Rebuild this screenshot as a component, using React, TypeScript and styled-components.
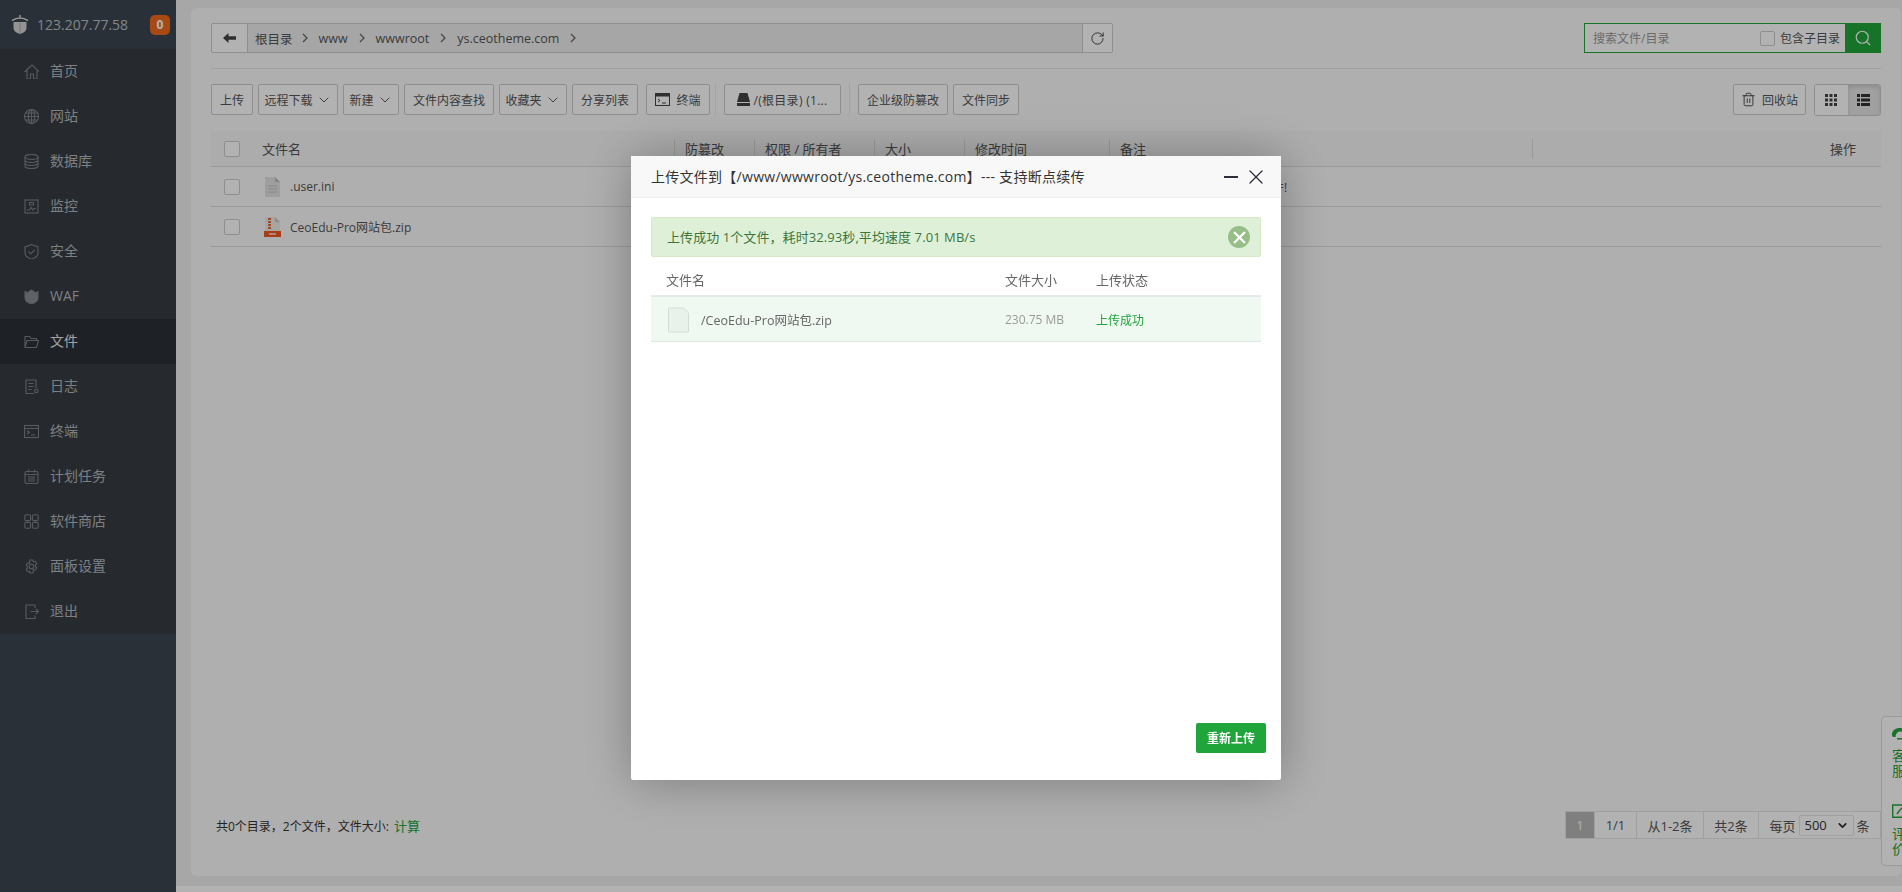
import React from 'react'
import styled, {createGlobalStyle} from 'styled-components'
import {ChevronDown, Search, RotateCw, Trash2, X} from 'lucide-react'

const FONT = `"Open Sans", "Noto Sans CJK SC", sans-serif`

const GlobalStyle = createGlobalStyle`
  html, body { margin: 0; padding: 0; height: 100%; overflow: hidden; background: #fff; }
  * { box-sizing: border-box; }
  body { font-family: ${FONT}; font-size: 12px; color: #555; }
`

const Page = styled.div`
  display: flex;
  width: 1902px;
  height: 892px;
`

const Sidebar = styled.aside`
  width: 176px;
  flex: none;
  background: #3d454f;
`

const Brand = styled.div`
  height: 49px;
  display: flex;
  align-items: center;
  padding: 0 6px 0 11px;
  color: #b9c0c6;
  font-size: 14px;
`

const BrandIp = styled.span`
  margin-left: 8px;
  flex: 1;
`

const Badge = styled.span`
  width: 20px;
  height: 20px;
  border-radius: 5px;
  background: #f0691c;
  color: #fff;
  font-size: 12px;
  font-weight: 700;
  display: flex;
  align-items: center;
  justify-content: center;
`

const NavList = styled.nav`
  background: #373d44;
`

const NavItem = styled.a<{$active?: boolean}>`
  height: 45px;
  display: flex;
  align-items: center;
  padding-left: 24px;
  gap: 11px;
  font-size: 14px;
  color: ${p => (p.$active ? '#e8e8e8' : '#b4b8bc')};
  background: ${p => (p.$active ? '#2c3036' : 'transparent')};
`

const NavLabel = styled.span`
  margin-top: -3px;
`

const NavIcon = styled.svg`
  width: 15px;
  height: 15px;
  flex: none;
  fill: none;
  stroke: #7f8286;
  stroke-width: 1.1;
`

const Main = styled.main`
  flex: 1;
  min-width: 0;
  background: #f0f0f0;
  padding: 8px 1px 10px 15px;
  height: 886px;
`

const Box = styled.section`
  height: 100%;
  background: #fbfbfb;
  border-radius: 5px;
  padding: 15px 20px 0 20px;
  position: relative;
  display: flex;
  flex-direction: column;
`

const TopRow = styled.div`
  display: flex;
  justify-content: space-between;
  height: 46px;
  flex: none;
  border-bottom: 1px solid #e5e5e5;
`

const PathBar = styled.div`
  width: 902px;
  height: 30px;
  display: flex;
  border: 1px solid #ccc;
  border-radius: 2px;
  background: #fff;
`

const BackBtn = styled.span`
  width: 36px;
  display: flex;
  align-items: center;
  justify-content: center;
  border-right: 1px solid #ccc;
`

const Crumbs = styled.div`
  flex: 1;
  background: #eee;
  display: flex;
  align-items: center;
  padding-left: 7px;
  gap: 10px;
  color: #555;
  font-size: 12.5px;
`

const Crumb = styled.span`
  &:first-child {
    margin-right: -2px;
  }
`

const CrumbArrow = styled.svg`
  width: 8px;
  height: 10px;
  fill: none;
  stroke: #666;
  stroke-width: 1.3;
`

const RefreshBtn = styled.span`
  width: 30px;
  display: flex;
  align-items: center;
  justify-content: center;
  border-left: 1px solid #ccc;
  color: #444;
`

const SearchBox = styled.div`
  width: 297px;
  height: 30px;
  display: flex;
  align-items: center;
  border: 1px solid #20a53a;
  background: #fff;
  padding-left: 8px;
  color: #999;
`

const SearchHint = styled.span`
  flex: 1;
`

const SearchCheck = styled.label`
  display: flex;
  align-items: center;
  gap: 5px;
  color: #555;
  margin-right: 5px;
`

const SearchBtn = styled.span`
  width: 36px;
  height: 30px;
  margin-right: -1px;
  background: #20a53a;
  color: #fff;
  display: flex;
  align-items: center;
  justify-content: center;
`

const Check = styled.span<{$size?: number}>`
  width: ${p => p.$size ?? 16}px;
  height: ${p => p.$size ?? 16}px;
  flex: none;
  display: block;
  background: #fff;
  border: 1px solid #ccc;
  border-radius: 2px;
`

const Toolbar = styled.div`
  display: flex;
  align-items: center;
  height: 31px;
  flex: none;
  margin-top: 15px;
  gap: 5px;
`

const Btn = styled.span<{$w: number; $offset?: number}>`
  width: ${p => p.$w}px;
  height: 31px;
  flex: none;
  margin-left: ${p => p.$offset ?? 0}px;
  display: flex;
  align-items: center;
  justify-content: center;
  gap: 3px;
  border: 1px solid #ccc;
  border-radius: 2px;
  background: #fff;
  color: #555;
  white-space: nowrap;
`

const DiskLabel = styled.span`
  letter-spacing: 0.3px;
`

const Divider = styled.span<{$offset?: number}>`
  width: 1px;
  height: 31px;
  margin: 0 3px 0 ${p => p.$offset ?? 0}px;
  background: #e8e8e8;
`

const ToolSpacer = styled.span`
  flex: 1;
`

const ViewToggle = styled.div`
  width: 67px;
  height: 32px;
  margin-left: 3px;
  display: flex;
  border: 1px solid #ccc;
  border-radius: 3px;
  overflow: hidden;
  background: #fff;
`

const ViewBtn = styled.span<{$on?: boolean}>`
  flex: 1;
  display: flex;
  align-items: center;
  justify-content: center;
  background: ${p => (p.$on ? '#e6e6e6' : '#fff')};
  box-shadow: ${p => (p.$on ? 'inset 0 2px 4px rgba(0,0,0,.13)' : 'none')};
`

const TableHead = styled.div`
  display: grid;
  grid-template-columns: 51px 412px 80px 120px 90px 145px 423px 1fr;
  height: 36px;
  flex: none;
  margin-top: 16px;
  align-items: center;
  background: #f6f6f6;
  border-bottom: 1px solid #ddd;
  font-size: 13px;
  color: #555;
`

const CheckCell = styled.span`
  padding-left: 13px;
`

const HeadCell = styled.span<{$sep?: boolean}>`
  height: 20px;
  display: flex;
  align-items: center;
  padding-left: 10px;
  border-left: ${p => (p.$sep ? '1px solid #ddd' : 'none')};
`

const NameHead = styled.span``

const ActionHead = styled(HeadCell)`
  justify-content: flex-end;
  padding-right: 25px;
`

const FileRow = styled.div`
  display: flex;
  align-items: center;
  height: 40px;
  flex: none;
  border-bottom: 1px solid #ddd;
  padding-left: 13px;
`

const FileIcon = styled.svg`
  width: 17px;
  height: 20px;
  margin-left: 24px;
  flex: none;
`

const FileName = styled.span`
  margin-left: 9px;
  color: #555;
  width: 400px;
`

const FileNote = styled.span`
  margin-left: 442px;
  color: #555;
  white-space: nowrap;
`

const Footer = styled.div`
  margin-top: auto;
  margin-bottom: 37px;
  display: flex;
  align-items: center;
  justify-content: space-between;
  height: 28px;
  flex: none;
  padding-left: 5px;
  color: #333;
`

const FooterText = styled.span`
  padding-top: 1px;
`

const GreenLink = styled.span`
  color: #20a53a;
  font-size: 13px;
  margin-left: 2px;
`

const Pager = styled.div`
  display: flex;
  height: 28px;
  border: 1px solid #e5e5e5;
  border-left: 0;
  background: #fff;
  color: #555;
`

const PageCell = styled.span<{$w: number; $on?: boolean}>`
  width: ${p => p.$w}px;
  display: flex;
  align-items: center;
  justify-content: center;
  gap: 3px;
  border-left: 1px solid #e5e5e5;
  font-size: 13px;
  background: ${p => (p.$on ? '#b7b7b7' : 'transparent')};
  color: ${p => (p.$on ? '#fff' : 'inherit')};
`

const PerPage = styled.span`
  width: 55px;
  height: 21px;
  display: flex;
  align-items: center;
  justify-content: space-between;
  padding: 0 4px 0 5px;
  border: 1px solid #e5e5e5;
  border-radius: 2px;
  color: #333;
  font-size: 13px;
`

const FloatTab = styled.div`
  position: absolute;
  right: -1px;
  top: 708px;
  width: 21px;
  height: 150px;
  overflow: hidden;
  background: #fff;
  border: 1px solid #ddd;
  border-right: 0;
  border-radius: 5px 0 0 5px;
  padding: 11px 0 0 10px;
  color: #20a53a;
  font-size: 14px;
  line-height: 15px;
`

const FloatItem = styled.div`
  width: 14px;
  height: 76px;
`

const FloatIcon = styled.svg`
  display: block;
  margin-bottom: 8px;
`

const Overlay = styled.div`
  position: fixed;
  inset: 0;
  background: rgba(0, 0, 0, 0.3);
`

const Modal = styled.div`
  position: fixed;
  left: 631px;
  top: 156px;
  width: 650px;
  height: 624px;
  background: #fff;
  border-radius: 2px;
  box-shadow: 1px 1px 50px rgba(0, 0, 0, 0.3);
  display: flex;
  flex-direction: column;
`

const ModalHead = styled.div`
  height: 42px;
  flex: none;
  display: flex;
  align-items: center;
  padding: 0 13px 0 20px;
  background: #f8f8f8;
  border-bottom: 1px solid #eee;
  color: #333;
  font-size: 14px;
`

const ModalTitle = styled.span`
  flex: 1;
  padding-bottom: 2px;
  letter-spacing: 0.27px;
  white-space: nowrap;
`

const MinLine = styled.span`
  width: 14px;
  height: 2px;
  background: #2e2d3c;
  margin-right: 6px;
`

const ModalBody = styled.div`
  flex: 1;
  padding: 19px 20px 0;
  display: flex;
  flex-direction: column;
`

const Alert = styled.div`
  height: 40px;
  flex: none;
  display: flex;
  align-items: center;
  justify-content: space-between;
  padding: 0 10px 0 15px;
  background: #dff0d8;
  border: 1px solid #d6e9c6;
  border-radius: 2px;
  color: #3c763d;
  font-size: 13px;
  letter-spacing: 0.08px;
`

const AlertText = styled.span`
  margin-top: -2px;
`

const AlertClose = styled.span`
  width: 22px;
  height: 22px;
  border-radius: 50%;
  background: #96bf87;
  color: #fff;
  display: flex;
  align-items: center;
  justify-content: center;
`

const UploadGrid = styled.div`
  display: grid;
  grid-template-columns: 339px 91px 1fr;
  align-items: center;
`

const UploadHead = styled(UploadGrid)`
  height: 40px;
  flex: none;
  padding: 6px 0 0 15px;
  color: #666;
  font-size: 13px;
  border-bottom: 2px solid #e4e9ec;
`

const UploadRow = styled(UploadGrid)`
  height: 45px;
  flex: none;
  padding: 1px 0 0 15px;
  background: #f0f8f2;
  border-bottom: 1px solid #e0e8e2;
`

const UploadName = styled.span`
  display: flex;
  align-items: center;
  gap: 11px;
  color: #666;
  font-size: 12.5px;
`

const UploadSize = styled.span`
  color: #999;
`

const UploadState = styled.span`
  color: #20a53a;
`

const ModalFoot = styled.div`
  margin-top: auto;
  margin-right: -5px;
  margin-bottom: 27px;
  display: flex;
  justify-content: flex-end;
`

const PrimaryBtn = styled.span`
  width: 70px;
  height: 30px;
  border-radius: 2px;
  background: #20a53a;
  color: #fff;
  font-weight: 700;
  display: flex;
  align-items: center;
  justify-content: center;
`

const nav: {label: string; icon: React.ReactNode; active?: boolean}[] = [
  {label: '首页', icon: <path d="M.5 8 8 1l7.500 7M3 6.500V15h3.500v-5h3v5H13V6.500" />},
  {
    label: '网站',
    icon: (
      <>
        <circle cx="7.500" cy="7.500" r="7" />
        <ellipse cx="7.500" cy="7.500" rx="3.200" ry="7" />
        <path d="M7.500 .5v14M.5 7.500h14M1.500 4h12M1.500 11h12" />
      </>
    ),
  },
  {
    label: '数据库',
    icon: (
      <>
        <ellipse cx="7.500" cy="3" rx="6.500" ry="2.500" />
        <path d="M1 3v9c0 1.400 2.900 2.500 6.500 2.500S14 13.400 14 12V3M1 6c0 1.400 2.900 2.500 6.500 2.500S14 7.400 14 6M1 9c0 1.400 2.900 2.500 6.500 2.500S14 10.400 14 9" />
      </>
    ),
  },
  {
    label: '监控',
    icon: (
      <>
        <rect x="1" y="1" width="13" height="13" />
        <path d="M3 11h2.500L7 8.500l1.800 2.500 1.200-1.500h2M5.500 3.500h4v2.500h-4z" />
      </>
    ),
  },
  {
    label: '安全',
    icon: <path d="M7.500 .5 14 3v6c0 3-3 5-6.500 6C4 14 1 12 1 9V3zM4.500 7.500l2.300 2.300 4-4" />,
  },
  {
    label: 'WAF',
    icon: <path fill="#8a8d91" d="M1 2.500l2.500 1.200L7.500 1l4 2.700L14 2.500V9c0 3-3 5-6.500 6C4 14 1 12 1 9z" />,
  },
  {
    label: '文件',
    active: true,
    icon: <path d="M1 13.500v-11h4.500l1.500 2h5.500v2M1 13.500h11.500l2-7H3z" />,
  },
  {
    label: '日志',
    icon: (
      <>
        <path d="M12 9V1H2v13.500h8M4.500 4.500h5M4.500 7.500h5M4.500 10.500h3" />
        <circle cx="12.300" cy="12" r="1.700" />
      </>
    ),
  },
  {
    label: '终端',
    icon: (
      <>
        <rect x=".5" y="1.500" width="14" height="12" />
        <path d="M.5 4.500h14M3 6.500l2.500 1.700L3 10M7 11h4" />
      </>
    ),
  },
  {
    label: '计划任务',
    icon: (
      <>
        <rect x="1" y="2.500" width="13" height="12" rx="1.500" />
        <path d="M1 5.500h13M4.500 .5v3M10.500 .5v3M4 8h7M4 10h7M4 12h7" />
      </>
    ),
  },
  {
    label: '软件商店',
    icon: (
      <>
        <rect x=".8" y=".8" width="5.800" height="5.800" rx="1.400" />
        <rect x="8.400" y=".8" width="5.800" height="5.800" rx="1.400" />
        <rect x=".8" y="8.400" width="5.800" height="5.800" rx="1.400" />
        <rect x="8.400" y="8.400" width="5.800" height="5.800" rx="1.400" />
      </>
    ),
  },
  {
    label: '面板设置',
    icon: (
      <>
        <path d="M6 1h3l.5 1.800 1.800-.5 1.500 2.400-1.300 1.300v1.500l1.300 1.300-1.500 2.400-1.800-.5L9 14H6l-.5-1.800-1.800.5-1.500-2.400 1.300-1.300V7.500L2.200 6.200l1.500-2.400 1.800.5z" />
        <circle cx="7.500" cy="7.500" r="2.300" />
      </>
    ),
  },
  {
    label: '退出',
    icon: <path d="M11 4V1H2v13.500h9v-3M6.500 7.500h8M12 5l2.500 2.500L12 10" />,
  },
]

const crumbs = ['根目录', 'www', 'wwwroot', 'ys.ceotheme.com']

const Chevron = () => <ChevronDown size={16} strokeWidth={1.3} color="#444" />

const PlainFile = () => (
  <FileIcon viewBox="0 0 17 20">
    <path d="M1 0h10l5 5v15H1z" fill="#e3e3e3" />
    <path d="M11 0l5 5h-5z" fill="#bcbcbc" />
    <path d="M4 9h9M4 12h9M4 15h9" stroke="#c4c4c4" />
  </FileIcon>
)

const ZipFile = () => (
  <FileIcon viewBox="0 0 17 20">
    <path d="M1 0h10l5 5v15H1z" fill="#f0ece8" />
    <path d="M11 0l5 5h-5z" fill="#cfc8c2" />
    <path d="M4 1h3v2H4zM4 4h3v2H4zM4 7h3v2H4zM4 10h3v2H4z" fill="#e8683a" />
    <rect x="0" y="14" width="17" height="6" fill="#ef5a24" />
    <rect x="5" y="16" width="7" height="2" fill="#f6c4ae" />
  </FileIcon>
)

export default function App() {
  return (
    <Page>
      <GlobalStyle />
      <Sidebar>
        <Brand>
          <svg width="18" height="19" viewBox="0 0 18 19">
            <path d="M2.500 7h13v6c0 3-3 5-6.500 6-3.500-1-6.500-3-6.500-6z" fill="#d4d4d4" />
            <path d="M1 5.500Q9 .5 17 5.500M9 0v3" stroke="#d4d4d4" strokeWidth="1.500" fill="none" />
            <path d="M9 8v10" stroke="#a9a9a9" />
          </svg>
          <BrandIp>123.207.77.58</BrandIp>
          <Badge>0</Badge>
        </Brand>
        <NavList>
          {nav.map(item => (
            <NavItem key={item.label} $active={item.active}>
              <NavIcon viewBox="0 0 15 15">{item.icon}</NavIcon>
              <NavLabel>{item.label}</NavLabel>
            </NavItem>
          ))}
        </NavList>
      </Sidebar>
      <Main>
        <Box>
          <TopRow>
            <PathBar>
              <BackBtn>
                <svg width="13" height="10" viewBox="0 0 13 10" fill="#444">
                  <path d="M0 5l5.500-5v3.300H13v3.400H5.500V10z" />
                </svg>
              </BackBtn>
              <Crumbs>
                {crumbs.map(c => (
                  <React.Fragment key={c}>
                    <Crumb>{c}</Crumb>
                    <CrumbArrow viewBox="0 0 8 10">
                      <path d="M2 1l4 4-4 4" />
                    </CrumbArrow>
                  </React.Fragment>
                ))}
              </Crumbs>
              <RefreshBtn>
                <RotateCw size={15} strokeWidth={1.6} />
              </RefreshBtn>
            </PathBar>
            <SearchBox>
              <SearchHint>搜索文件/目录</SearchHint>
              <SearchCheck>
                <Check $size={15} />
                包含子目录
              </SearchCheck>
              <SearchBtn>
                <Search size={18} strokeWidth={1.6} />
              </SearchBtn>
            </SearchBox>
          </TopRow>
          <Toolbar>
            <Btn $w={42}>上传</Btn>
            <Btn $w={80}>远程下载<Chevron /></Btn>
            <Btn $w={56}>新建<Chevron /></Btn>
            <Btn $w={90}>文件内容查找</Btn>
            <Btn $w={68}>收藏夹<Chevron /></Btn>
            <Btn $w={66}>分享列表</Btn>
            <Btn $w={64} $offset={3}>
              <svg width="15" height="13" viewBox="0 0 15 13">
                <rect x=".5" y=".5" width="14" height="12" fill="#fff" stroke="#444" />
                <rect x=".5" y=".5" width="14" height="3" fill="#444" />
                <path d="M3 6l2 1.500-2 1.500M7 10h4" stroke="#444" fill="none" />
              </svg>
              &nbsp;终端
            </Btn>
            <Divider />
            <Btn $w={117}>
              <svg width="13" height="13" viewBox="0 0 13 13">
                <path d="M2.500 0h8L13 9H0z" fill="#444" />
                <rect y="10" width="13" height="3" fill="#444" />
              </svg>
              <DiskLabel>/(根目录) (1...</DiskLabel>
            </Btn>
            <Divider $offset={3} />
            <Btn $w={90}>企业级防篡改</Btn>
            <Btn $w={66}>文件同步</Btn>
            <ToolSpacer />
            <Btn $w={73}>
              <Trash2 size={15} strokeWidth={1.5} color="#444" />
              &nbsp;回收站
            </Btn>
            <ViewToggle>
              <ViewBtn>
                <svg width="12" height="12" viewBox="0 0 12 12" fill="#444">
                  <path d="M0 0h3v3H0zM4.500 0h3v3h-3zM9 0h3v3H9zM0 4.500h3v3H0zM4.500 4.500h3v3h-3zM9 4.500h3v3H9zM0 9h3v3H0zM4.500 9h3v3h-3zM9 9h3v3H9z" />
                </svg>
              </ViewBtn>
              <ViewBtn $on>
                <svg width="13" height="12" viewBox="0 0 13 12" fill="#333">
                  <path d="M0 0h3v3H0zM4 0h9v3H4zM0 4.500h3v3H0zM4 4.500h9v3H4zM0 9h3v3H0zM4 9h9v3H4z" />
                </svg>
              </ViewBtn>
            </ViewToggle>
          </Toolbar>
          <TableHead>
            <CheckCell>
              <Check />
            </CheckCell>
            <NameHead>文件名</NameHead>
            <HeadCell $sep>防篡改</HeadCell>
            <HeadCell $sep>权限 / 所有者</HeadCell>
            <HeadCell $sep>大小</HeadCell>
            <HeadCell $sep>修改时间</HeadCell>
            <HeadCell $sep>备注</HeadCell>
            <ActionHead $sep>操作</ActionHead>
          </TableHead>
          <FileRow>
            <Check />
            <PlainFile />
            <FileName>.user.ini</FileName>
            <FileNote>PS: 基础目录防跨站配置文件!</FileNote>
          </FileRow>
          <FileRow>
            <Check />
            <ZipFile />
            <FileName>CeoEdu-Pro网站包.zip</FileName>
          </FileRow>
          <Footer>
            <FooterText>
              共0个目录，2个文件，文件大小: <GreenLink>计算</GreenLink>
            </FooterText>
            <Pager>
              <PageCell $w={29} $on>1</PageCell>
              <PageCell $w={42}>1/1</PageCell>
              <PageCell $w={67}>从1-2条</PageCell>
              <PageCell $w={55}>共2条</PageCell>
              <PageCell $w={122}>
                每页
                <PerPage>
                  500
                  <ChevronDown size={13} strokeWidth={3.2} color="#333" />
                </PerPage>
                条
              </PageCell>
            </Pager>
          </Footer>
          <FloatTab>
            <FloatItem>
              <FloatIcon width="16" height="12" viewBox="0 0 16 12" fill="#20a53a">
                <path d="M0 6.500C0 2.500 3.500 0 8 0s8 2.500 8 6.500h-3C12 4 10 3.500 8 3.500S4 5 3.500 9H1.500C.5 9 0 8 0 6.500zM5 10h6v1.500H5z" />
              </FloatIcon>
              客服
            </FloatItem>
            <FloatItem>
              <FloatIcon width="16" height="14" viewBox="0 0 16 14" fill="none" stroke="#20a53a" strokeWidth="1.400">
                <path d="M16 1H.7v12.300H16M5 10l2-3 6-6 3 3" />
              </FloatIcon>
              评价
            </FloatItem>
          </FloatTab>
        </Box>
      </Main>
      <Overlay />
      <Modal>
        <ModalHead>
          <ModalTitle>上传文件到【/www/wwwroot/ys.ceotheme.com】--- 支持断点续传</ModalTitle>
          <MinLine />
          <X size={24} strokeWidth={1.3} color="#2e2d3c" />
        </ModalHead>
        <ModalBody>
          <Alert>
            <AlertText>上传成功 1个文件，耗时32.93秒,平均速度 7.01 MB/s</AlertText>
            <AlertClose>
              <X size={19} strokeWidth={3} />
            </AlertClose>
          </Alert>
          <UploadHead>
            <span>文件名</span>
            <span>文件大小</span>
            <span>上传状态</span>
          </UploadHead>
          <UploadRow>
            <UploadName>
              <svg width="24" height="26" viewBox="0 0 24 26">
                <path d="M2.500 1h15l5 5v19h-20z" fill="#e8f1ea" stroke="#d4dcd6" />
              </svg>
              /CeoEdu-Pro网站包.zip
            </UploadName>
            <UploadSize>230.75 MB</UploadSize>
            <UploadState>上传成功</UploadState>
          </UploadRow>
          <ModalFoot>
            <PrimaryBtn>重新上传</PrimaryBtn>
          </ModalFoot>
        </ModalBody>
      </Modal>
    </Page>
  )
}
